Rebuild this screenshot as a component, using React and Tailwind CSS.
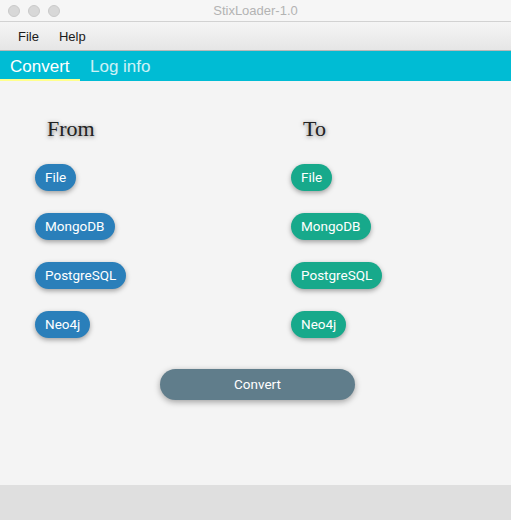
import { useState } from 'react';

const SOURCES = ['File', 'MongoDB', 'PostgreSQL', 'Neo4j'];

function Pill({ label, color }) {
  return (
    <button
      className={`h-[27px] px-[10px] rounded-full text-[13.5px] text-white shadow-[0_2px_5px_rgba(0,0,0,0.35)] ${color}`}
      style={{ fontFamily: 'Roboto, sans-serif' }}
    >
      {label}
    </button>
  );
}

function Column({ title, color }) {
  return (
    <div className="flex flex-col items-start">
      <h2
        className="ml-[12px] h-[30px] text-[22px] leading-[30px] text-[#222] [text-shadow:0_1px_4px_rgba(0,0,0,0.5)]"
        style={{ fontFamily: '"Liberation Serif", serif' }}
      >
        {title}
      </h2>
      <div className="mt-[20px] flex flex-col items-start gap-[22px]">
        {SOURCES.map((s) => (
          <Pill key={s} label={s} color={color} />
        ))}
      </div>
    </div>
  );
}

export default function App() {
  const [tab, setTab] = useState('convert');

  return (
    <div
      className="w-[511px] h-[520px] flex flex-col bg-[#f4f4f4] overflow-hidden"
      style={{ fontFamily: '"Liberation Sans", Arial, sans-serif' }}
    >
      {/* title bar */}
      <div className="relative h-[22px] shrink-0 flex items-center bg-[#f6f6f6] border-b border-[#d2d2d2]">
        <div className="flex gap-[8px] pl-[8px]">
          <span className="w-[12px] h-[12px] rounded-full bg-[#d8d8d8] border border-[#cacaca]" />
          <span className="w-[12px] h-[12px] rounded-full bg-[#d8d8d8] border border-[#cacaca]" />
          <span className="w-[12px] h-[12px] rounded-full bg-[#d8d8d8] border border-[#cacaca]" />
        </div>
        <div className="absolute inset-0 flex items-center justify-center text-[13px] text-[#b3b3b3]">
          StixLoader-1.0
        </div>
      </div>

      {/* menu bar */}
      <div className="h-[29px] shrink-0 flex items-center gap-[20px] pl-[18px] pt-[2px] bg-gradient-to-b from-[#f5f5f5] to-[#e6e6e6] border-b border-[#b8b8b8] text-[13px] text-[#1a1a1a]">
        <span>File</span>
        <span>Help</span>
      </div>

      {/* tabs */}
      <div className="h-[30px] shrink-0 flex bg-[#00bcd4]">
        <button
          onClick={() => setTab('convert')}
          className={`w-[80px] text-[17px] text-left pl-[10px] pt-[3px] border-b-2 ${
            tab === 'convert' ? 'text-white border-[#ffff8d]' : 'text-white/80 border-transparent'
          }`}
        >
          Convert
        </button>
        <button
          onClick={() => setTab('log')}
          className={`text-[17px] text-left pl-[10px] pr-[10px] pt-[3px] border-b-2 ${
            tab === 'log' ? 'text-white border-[#ffff8d]' : 'text-white/80 border-transparent'
          }`}
        >
          Log info
        </button>
      </div>

      {/* content */}
      <div className="flex-1 flex flex-col">
        <div className="grid grid-cols-[256px_1fr] pl-[35px] pt-[33px]">
          <Column title="From" color="bg-[#2a7fba]" />
          <Column title="To" color="bg-[#17a98b]" />
        </div>
        <div className="flex justify-center mt-[31px] pl-[4px]">
          <button
            className="w-[195px] h-[31px] rounded-full bg-[#607d8b] text-white text-[13.5px] shadow-[0_2px_6px_rgba(0,0,0,0.35)]"
            style={{ fontFamily: 'Roboto, sans-serif' }}
          >
            Convert
          </button>
        </div>
      </div>

      {/* footer */}
      <div className="h-[35px] shrink-0 bg-[#dfdfdf]" />
    </div>
  );
}
